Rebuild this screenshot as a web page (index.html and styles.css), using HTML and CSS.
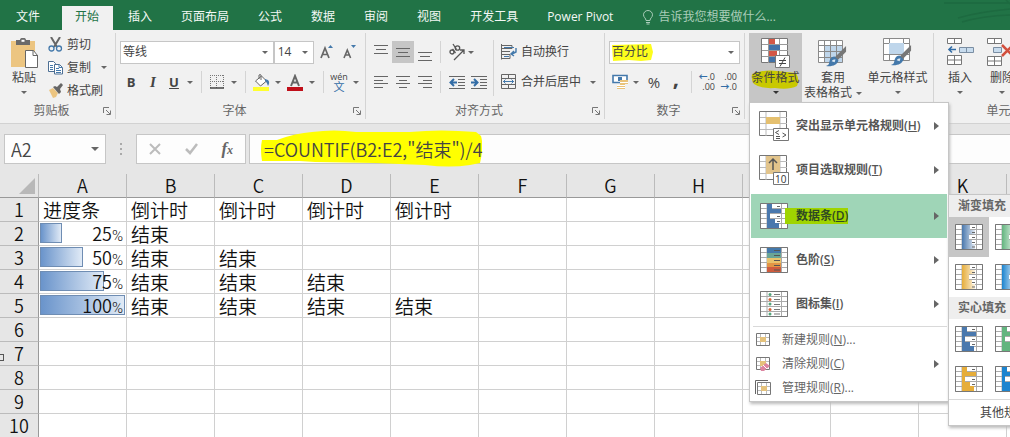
FILE: index.html
```html
<!DOCTYPE html>
<html lang="zh-CN">
<head>
<meta charset="utf-8">
<title>Excel</title>
<link rel="stylesheet" href="styles.css">
</head>
<body>
<svg class="defs" aria-hidden="true">
  <defs>
    <linearGradient id="fade" gradientUnits="userSpaceOnUse" x1="7" y1="0" x2="21" y2="0"><stop offset="0" stop-color="#fff" stop-opacity="0"/><stop offset="1" stop-color="#fff" stop-opacity=".9"/></linearGradient>
    <symbol id="grid28" viewBox="0 0 28 26">
      <path d="M.5 .5h27v25H.5zM7 .5v25M21.500 .5v25M.5 5.500h27M.5 10.500h27M.5 15.500h27M.5 20.500h27" fill="#fff" stroke="#aaa"/>
      <path d="M.5 .5h27v25H.5z" fill="none" stroke="#777"/>
    </symbol>
    <symbol id="bars-solid" viewBox="0 0 28 26">
      <use href="#grid28"/>
      <path d="M7 1h5v5H7zM7 6h14v4H7zM7 10h3v6H7zM7 16h8v4H7zM7 20h12v5H7z" fill="currentColor"/>
      <path d="M17 3.500h3M17 13.500h3M17 18.500h3" stroke="#666"/>
    </symbol>
    <symbol id="bars-fade" viewBox="0 0 28 26">
      <use href="#grid28"/>
      <path d="M7 1h8v5H7zM7 6h13v4H7zM7 10h7v6H7zM7 16h10v4H7zM7 20h13v5H7z" fill="currentColor"/>
      <path d="M7 1h8v5H7zM7 6h13v4H7zM7 10h7v6H7zM7 16h10v4H7zM7 20h13v5H7z" fill="url(#fade)"/>
      <path d="M17 3.500h3M17 8.500h3M17 13.500h3M17 18.500h3M17 23h3" stroke="#666"/>
    </symbol>
    <symbol id="launch" viewBox="0 0 8 8"><path d="M.5 6V.5H6M3 3l4 4M7.500 3.500v4h-4" fill="none" stroke="#777"/></symbol>
    <symbol id="brush" viewBox="0 0 24 24">
      <path d="M22 1v6l-9 9-3-3z" fill="#777"/><path d="M10 12l4 4c-1 5-7 7-13 6 4-1 3-3 4-6 1-3 3-4 5-4z" fill="#4479ab"/><path d="M7 17c1-2 2-2 4-2l-1 3z" fill="#dce9f4"/>
    </symbol>
    <symbol id="mini" viewBox="0 0 14 14"><path d="M.5 .5h13v12H.5z" fill="#fff" stroke="#777"/><path d="M1 4.500h12M1 8.500h12M4.500 1v11M9.500 1v11" stroke="#bbb"/><path d="M4 4h6v5H4z" fill="#e5c27c"/></symbol>
  </defs>
</svg>

<nav class="tabs">
  <button class="tab tab-file">文件</button>
  <button class="tab tab-active">开始</button>
  <button class="tab">插入</button>
  <button class="tab">页面布局</button>
  <button class="tab">公式</button>
  <button class="tab">数据</button>
  <button class="tab">审阅</button>
  <button class="tab">视图</button>
  <button class="tab">开发工具</button>
  <button class="tab">Power Pivot</button>
  <button class="tab tell">
    <svg width="12" height="15" viewBox="0 0 12 15"><path d="M4 10.500C4 8 1.500 7.500 1.500 4.800a4.500 4.300 0 0 1 9 0C10.500 7.500 8 8 8 10.500zM4 12.500h4M4.500 14h3" fill="none" stroke="#a9cdb9"/></svg>
    告诉我您想要做什么...
  </button>
  <svg class="swoosh" width="70" height="30" viewBox="0 0 70 30"><path d="M4 3h66M18 18q20-6 52-9M22 22q20-6 48-7M66 0l4 4" fill="none" stroke="#1d6a40" stroke-width="1.500"/></svg>
</nav>

<div class="ribbon">
  <section class="group clipboard">
    <div class="content">
      <button class="big paste">
        <svg width="29" height="31" viewBox="0 0 29 31"><path d="M1 3h24v26H1z" fill="#ecc581"/><path d="M6 2h4c0-3 6-3 6 0h4v5H6z" fill="#6a6a6a"/><path d="M11.500 1.800h3v2h-3z" fill="#fff"/><path d="M15.500 12.500h8l4 5v12h-12z" fill="#fff" stroke="#666"/><path d="M23 12.500v5h5" fill="none" stroke="#666"/></svg>
        <span>粘贴</span><i class="arrow"></i>
      </button>
      <div class="stack">
        <button class="row-btn"><svg width="15" height="15" viewBox="0 0 15 15"><path d="M3 0l6 10M12 0L6 10" stroke="#666" stroke-width="2"/><circle cx="3.500" cy="11.500" r="2.500" fill="none" stroke="#4479ab" stroke-width="1.300"/><circle cx="11" cy="11.500" r="2.500" fill="none" stroke="#4479ab" stroke-width="1.300"/></svg>剪切</button>
        <button class="row-btn"><svg width="15" height="15" viewBox="0 0 15 15"><path d="M.5 1.500h5l2 2v8h-7z" fill="#fff" stroke="#4d6f94"/><path d="M6.500 4.500h5l3 3v6.500h-8z" fill="#fff" stroke="#4d6f94"/><path d="M11 4.500v3h3M8 8.500h3M8 10.500h5M8 12.500h5M2 5.500h3M2 7.500h3M2 9.500h3" fill="none" stroke="#4479ab"/></svg>复制<i class="arrow after-copy"></i></button>
        <button class="row-btn"><svg width="15" height="15" viewBox="0 0 15 15"><path d="M1 7l4-2 5 5-2 4-3 1z" fill="#ecc581"/><path d="M5 4l2-1 2 1 4-4 2 2-3 4 1 3-2 2z" fill="#666"/></svg>格式刷</button>
      </div>
    </div>
    <footer class="caption"><span>剪贴板</span><button class="launcher" aria-label="剪贴板选项"><svg width="8" height="8"><use href="#launch"/></svg></button></footer>
  </section>

  <section class="group font">
    <div class="content rows">
      <div class="line">
        <label class="combo face"><input aria-label="字体" value="等线"><i class="arrow"></i></label>
        <label class="combo size"><input aria-label="字号" value="14"><i class="arrow"></i></label>
        <button class="tool grow" aria-label="增大字号"><svg width="14" height="16" viewBox="0 0 14 16"><path d="M1 14L5 4l4 10M2.500 10.500h5" fill="none" stroke="#666" stroke-width="1.700"/><path d="M8 4l2.500-3L13 4z" fill="#4479ab"/></svg></button>
        <button class="tool" aria-label="减小字号"><svg width="14" height="16" viewBox="0 0 14 16"><path d="M1 14l3.300-8 3.300 8M2 11h5" fill="none" stroke="#666" stroke-width="1.600"/><path d="M8 1l2.500 3L13 1z" fill="#4479ab"/></svg></button>
      </div>
      <div class="line">
        <button class="tool b">B</button>
        <button class="tool i">I</button>
        <button class="tool u">U</button><i class="arrow"></i>
        <i class="bar"></i>
        <button class="tool" aria-label="边框"><svg width="14" height="14" viewBox="0 0 14 14"><path d="M0 .5h14M0 6.500h14M.5 0v13M6.500 0v13M13.500 0v13" stroke="#777" stroke-dasharray="1 1"/><path d="M0 13h14" stroke="#444" stroke-width="1.500"/></svg></button><i class="arrow"></i>
        <i class="bar"></i>
        <button class="tool" aria-label="填充颜色"><svg width="17" height="17" viewBox="0 0 17 17"><path d="M2.500 7l6-5 5 5-6 5z" fill="#fff" stroke="#666"/><path d="M6 5V1q1.500-1 2 0v5" fill="none" stroke="#666"/><path d="M12 5l3 1c2 2 1 4 0 6q-1-4-3-5z" fill="#4479ab"/><path d="M0 13h16v4H0z" fill="#ffff2e"/></svg></button><i class="arrow"></i>
        <button class="tool" aria-label="字体颜色"><svg width="17" height="17" viewBox="0 0 17 17"><path d="M4 12L8 2l4 10M5.500 8.500h5" fill="none" stroke="#666" stroke-width="2"/><path d="M0 13h16v4H0z" fill="#c00f1a"/></svg></button><i class="arrow"></i>
        <i class="bar"></i>
        <button class="tool phon"><span>wén</span><b>文</b></button><i class="arrow"></i>
      </div>
    </div>
    <footer class="caption"><span>字体</span><button class="launcher" aria-label="字体选项"><svg width="8" height="8"><use href="#launch"/></svg></button></footer>
  </section>

  <section class="group align">
    <div class="content">
      <div class="rows">
        <div class="line">
          <button class="tool" aria-label="顶端对齐"><svg width="14" height="18"><path d="M0 2.500h14M2 6.500h10M0 10.500h14" stroke="#666"/></svg></button>
          <button class="tool on" aria-label="垂直居中"><svg width="14" height="18"><path d="M0 5.500h14M2 9.500h10M0 13.500h14" stroke="#666"/></svg></button>
          <button class="tool" aria-label="底端对齐"><svg width="14" height="18"><path d="M0 9.500h14M2 13.500h10M0 17.500h14" stroke="#666"/></svg></button>
          <i class="bar"></i>
          <button class="tool" aria-label="方向"><svg width="18" height="18" viewBox="0 0 18 18"><g fill="none" stroke="#555" stroke-width="1.300"><circle cx="4" cy="9" r="2"/><path d="M4.500 6l3 4"/><circle cx="9.500" cy="5" r="2.200"/><path d="M5 1l3.500 5.500M6 17L16 7M12 7h4v4"/></g></svg></button><i class="arrow"></i>
        </div>
        <div class="line">
          <button class="tool" aria-label="左对齐"><svg width="14" height="12"><path d="M0 .5h14M0 4.500h9M0 7.500h14M0 11.500h9" stroke="#666"/></svg></button>
          <button class="tool" aria-label="居中"><svg width="14" height="12"><path d="M0 .5h14M3 4.500h8M0 7.500h14M3 11.500h8" stroke="#666"/></svg></button>
          <button class="tool" aria-label="右对齐"><svg width="14" height="12"><path d="M0 .5h14M5 4.500h9M0 7.500h14M5 11.500h9" stroke="#666"/></svg></button>
          <i class="bar"></i>
          <button class="tool" aria-label="减少缩进"><svg width="16" height="13" viewBox="0 0 16 13"><path d="M0 .5h16M9 3.500h7M9 6.500h7M9 9.500h7M0 12.500h16" stroke="#666"/><path d="M8 6.500H2M5 3L1.500 6.500 5 10" fill="none" stroke="#336da6" stroke-width="2"/></svg></button>
          <button class="tool" aria-label="增加缩进"><svg width="16" height="13" viewBox="0 0 16 13"><path d="M0 .5h16M9 3.500h7M9 6.500h7M9 9.500h7M0 12.500h16" stroke="#666"/><path d="M0 6.500h6M3 3l3.500 3.500L3 10" fill="none" stroke="#336da6" stroke-width="2"/></svg></button>
        </div>
      </div>
      <i class="bar tall"></i>
      <div class="rows">
        <button class="row-btn"><svg width="16" height="16" viewBox="0 0 16 16"><path d="M.5 0v15.500M0 1.500h11v3H0M0 7.500h9M0 10.500h9v4H0" fill="none" stroke="#666"/><path d="M3 3.500h10M3 12.500h5" stroke="#4479ab"/><path d="M15 4v4l-4 2M13 7l-3 3 3 2" fill="none" stroke="#4479ab" stroke-width="1.400"/></svg>自动换行</button>
        <button class="row-btn"><svg width="16" height="16" viewBox="0 0 16 16"><path d="M.5 .5h14v14H.5zM.5 4.500h14M.5 10.500h14M7.500 .5v4M7.500 10.500v4" fill="none" stroke="#666"/><path d="M2 7.500h11M4.500 5.500l-2 2 2 2M10.500 5.500l2 2-2 2" fill="none" stroke="#4479ab"/></svg>合并后居中<i class="arrow"></i></button>
      </div>
    </div>
    <footer class="caption"><span>对齐方式</span><button class="launcher" aria-label="对齐选项"><svg width="8" height="8"><use href="#launch"/></svg></button></footer>
  </section>

  <section class="group number">
    <div class="content rows">
      <div class="line"><label class="combo format"><svg class="mark" viewBox="0 0 42 17" preserveAspectRatio="none"><path d="M1 1l39-1 2 8-2 8-10 1-12-1-16 1z" fill="#fdfd1c"/></svg><input aria-label="数字格式" value="百分比"><i class="arrow"></i></label></div>
      <div class="line">
        <button class="tool" aria-label="会计格式"><svg width="17" height="16" viewBox="0 0 17 16"><path d="M1 1.500h14v7H1z" fill="#fff" stroke="#4479ab" stroke-width="1.600"/><path d="M6 3h4v4H6z" fill="#4479ab"/><path d="M8 6h8v4h-3v5H5v-4h3z" fill="#e9c37a"/><path d="M8 8.500h8M5 11.500h8M5 13.500h8" stroke="#fff"/></svg></button><i class="arrow"></i>
        <button class="tool percent">%</button>
        <button class="tool comma">,</button>
        <i class="bar"></i>
        <button class="tool dec"><span><b>←</b>.0</span><span>.00</span></button>
        <button class="tool dec"><span>.00</span><span><b>→</b>.0</span></button>
      </div>
    </div>
    <footer class="caption"><span>数字</span><button class="launcher" aria-label="数字选项"><svg width="8" height="8"><use href="#launch"/></svg></button></footer>
  </section>

  <section class="group styles">
    <div class="content">
      <div class="anchor">
        <button class="big cond">
          <svg class="mark" viewBox="0 0 48 20" preserveAspectRatio="none"><path d="M1 5Q14 0 26 2l19 2q4 7 1 13-8 4-22 2-14 1-21-4Q0 12 1 5z" fill="#c9c900"/></svg>
          <svg width="30" height="31" viewBox="0 0 30 31"><path d="M.5 .5h26v24H.5z" fill="#fff" stroke="#777"/><path d="M7.500 1v24M18.500 1v24M1 6.500h26M1 12.500h26M1 18.500h26" stroke="#999"/><path d="M8 1h6v5H8zM8 13h8v5H8z" fill="#d35746"/><path d="M8 7h11v5H8zM8 19h6v5H8z" fill="#4272a8"/><path d="M14.500 17.500h14v12h-14z" fill="#fff" stroke="#777"/><path d="M18 22.500h7M18 25.500h7M24 19.500l-5 9" stroke="#444"/></svg>
          <span>条件格式</span><i class="arrow"></i>
        </button>

        <div class="menu">
          <button class="item"><svg width="30" height="31" viewBox="0 0 30 31"><path d="M.5 .5h27v24H.5z" fill="#fff" stroke="#777"/><path d="M7 1v24M21 1v24M1 6.500h27M1 12.500h27M1 18.500h27" stroke="#bbb"/><path d="M7 6h14v7H7z" fill="#e5c06f"/><path d="M14.500 17.500h15v12h-15z" fill="#fff" stroke="#777"/><path d="M20 19.500l-3.500 2 3.500 2M17 25.500h4M17 27.500h4M23.500 22l3.500 2-3.500 2" fill="none" stroke="#555"/></svg><span>突出显示单元格规则(<u>H</u>)</span><i class="more"></i></button>
          <button class="item"><svg width="30" height="31" viewBox="0 0 30 31"><path d="M.5 .5h27v24H.5z" fill="#fff" stroke="#777"/><path d="M7 1v24M21 1v24M1 6.500h27M1 12.500h27M1 18.500h27" stroke="#bbb"/><path d="M7 1h14v18H7z" fill="#e2c48b"/><path d="M14 15V4M10 8l4-4 4 4" fill="none" stroke="#555" stroke-width="1.500"/><path d="M14.500 17.500h15v12h-15z" fill="#fff" stroke="#777"/><text x="16" y="27.500" font-family="Open Sans, sans-serif" font-size="10" font-weight="400" fill="#333">10</text></svg><span>项目选取规则(<u>T</u>)</span><i class="more"></i></button>
          <div class="anchor selected">
            <button class="item"><svg class="blue" width="28" height="26"><use href="#bars-solid"/></svg><span class="hot">数据条(<u>D</u>)</span><i class="more"></i></button>
            <div class="submenu">
              <h3>渐变填充</h3>
              <div class="swatches">
                <button class="on blue" aria-label="蓝色渐变"><svg width="28" height="26"><use href="#bars-fade"/></svg></button>
                <button class="green" aria-label="绿色渐变"><svg width="28" height="26"><use href="#bars-fade"/></svg></button>
                <button class="orange" aria-label="橙色渐变"><svg width="28" height="26"><use href="#bars-fade"/></svg></button>
                <button class="sky" aria-label="浅蓝渐变"><svg width="28" height="26"><use href="#bars-fade"/></svg></button>
              </div>
              <h3>实心填充</h3>
              <div class="swatches">
                <button class="blue" aria-label="蓝色"><svg width="28" height="26"><use href="#bars-solid"/></svg></button>
                <button class="green" aria-label="绿色"><svg width="28" height="26"><use href="#bars-solid"/></svg></button>
                <button class="orange" aria-label="橙色"><svg width="28" height="26"><use href="#bars-solid"/></svg></button>
                <button class="sky" aria-label="浅蓝"><svg width="28" height="26"><use href="#bars-solid"/></svg></button>
              </div>
              <button class="other">其他规则</button>
            </div>
          </div>
          <button class="item"><svg width="28" height="26" viewBox="0 0 28 26"><use href="#grid28"/><path d="M7 1h14v5H7z" fill="#4479ab"/><path d="M7 6h14v5H7z" fill="#6aa596"/><path d="M7 11h14v5H7z" fill="#e9c36c"/><path d="M7 16h14v4H7z" fill="#e29545"/><path d="M7 20h14v5H7z" fill="#cf5c3e"/><path d="M14 3.500h6M14 8.500h6M14 13.500h6M14 18.500h6M14 23h6" stroke="#555"/></svg><span>色阶(<u>S</u>)</span><i class="more"></i></button>
          <button class="item"><svg width="28" height="26" viewBox="0 0 28 26"><use href="#grid28"/><path d="M14 3.500h6M14 8.500h6M14 13.500h6M14 18.500h6M14 23h6" stroke="#777"/><g fill="#d9653b"><circle cx="10" cy="8.500" r="1.500"/><circle cx="10" cy="18.500" r="1.500"/></g><g fill="#55a57c"><circle cx="10" cy="3.500" r="1.500"/><circle cx="10" cy="13" r="1.500"/><circle cx="10" cy="23" r="1.500"/></g></svg><span>图标集(<u>I</u>)</span><i class="more"></i></button>
          <hr>
          <button class="item small"><svg width="16" height="16" viewBox="0 0 16 16"><use href="#mini" x="1" y="1" width="14" height="14"/></svg><span>新建规则(<u>N</u>)...</span></button>
          <button class="item small"><svg width="16" height="16" viewBox="0 0 16 16"><use href="#mini" x="1" y="1" width="14" height="14"/><path d="M5 12l6-5 4 3-6 5H6z" fill="#dc84a0"/><path d="M8 9l4 4" stroke="#fff"/></svg><span>清除规则(<u>C</u>)</span><i class="more"></i></button>
          <button class="item small"><svg width="16" height="16" viewBox="0 0 16 16"><path d="M.5 14V.5H13" fill="none" stroke="#666"/><use href="#mini" x="2" y="2" width="14" height="14"/></svg><span>管理规则(<u>R</u>)...</span></button>
        </div>
      </div>
      <button class="big table-fmt"><svg width="30" height="31" viewBox="0 0 30 31"><path d="M.5 2.500h24v22H.5z" fill="#fff"/><path d="M7 8h18v17H7z" fill="#bfd6eb"/><path d="M.5 2.500h24v22H.5zM.5 7.500h24M.5 13.500h24M.5 19.500h24M6.500 3v22M12.500 3v22M18.500 3v22" fill="none" stroke="#8a8a8a"/><use href="#brush" x="7" y="7" width="23" height="23"/></svg><span>套用</span><span class="second">表格格式<i class="arrow"></i></span></button>
      <button class="big cell-style"><svg width="30" height="31" viewBox="0 0 30 31"><path d="M.5 .5h26v22H.5zM.5 5.500h26M.5 16.500h26M6.500 .5v22M20.500 .5v22" fill="#fff" stroke="#8a8a8a"/><path d="M6 5h15v11H6z" fill="#bfd6eb"/><use href="#brush" x="7" y="6" width="23" height="23"/></svg><span>单元格样式</span><i class="arrow"></i></button>
    </div>
  </section>

  <section class="group cells">
    <div class="content">
      <button class="big ins"><svg width="27" height="31" viewBox="0 0 27 31"><path d="M.5 .5h14v5H.5zM7.500 .5v5M.5 17.500h14v9H.5zM7.500 17.500v9M.5 22h14" fill="#fff" stroke="#777"/><path d="M12.500 9.500h14v5h-14zM19.500 9.500v5" fill="#c8dcee" stroke="#7a8ea3"/><path d="M2 11.500h7M5 8.500l-3 3 3 3" fill="none" stroke="#336da6" stroke-width="1.600"/></svg><span>插入</span><i class="arrow"></i></button>
      <button class="big ins"><svg width="30" height="31" viewBox="0 0 30 31"><path d="M.5 .5h14v5H.5zM7.500 .5v5M.5 18.500h14v9H.5zM7.500 18.500v9M.5 23h14" fill="#fff" stroke="#777"/><path d="M6.500 9.500h8v5h-8z" fill="#c8dcee" stroke="#7a8ea3"/><path d="M15 7l11 11M26 7L15 18" stroke="#d2503e" stroke-width="2.500"/></svg><span>删除</span><i class="arrow"></i></button>
    </div>
    <footer class="caption"><span>单元格</span></footer>
  </section>
</div>

<div class="formula-bar">
  <label class="field name"><input aria-label="名称框" value="A2"><i class="arrow"></i></label>
  <span class="dots"></span>
  <div class="field actions">
    <button aria-label="取消"><svg width="12" height="12"><path d="M1 1l10 10M11 1L1 11" stroke="#bcbcbc" stroke-width="2"/></svg></button>
    <button aria-label="输入"><svg width="13" height="12"><path d="M1 6l4 4 7-9" fill="none" stroke="#bcbcbc" stroke-width="2.500"/></svg></button>
    <button class="fx"><i>f</i><small>x</small></button>
  </div>
  <div class="field formula">
    <svg class="mark" viewBox="0 0 222 38" preserveAspectRatio="none"><path d="M2 11h15Q36 4 52 3q22-3 44 0h54q30-3 66 0l5 4q3 10-1 27l-10 2q-20 3-45 0l-50-2-60-1-15-1H2Q0 20 2 11z" fill="#ff0"/></svg>
    <input aria-label="编辑栏" value="=COUNTIF(B2:E2,&quot;结束&quot;)/4">
  </div>
</div>

<main class="sheet">
  <table>
    <thead><tr><th class="corner"></th><th>A</th><th>B</th><th>C</th><th>D</th><th>E</th><th>F</th><th>G</th><th>H</th><th></th><th></th><th>K</th><th></th></tr></thead>
    <tbody>
      <tr><th>1</th><td>进度条</td><td>倒计时</td><td>倒计时</td><td>倒计时</td><td>倒计时</td><td></td><td></td><td></td><td></td><td></td><td></td><td></td></tr>
      <tr><th>2</th><td class="val"><i style="width:25%"></i><span>25<b>%</b></span></td><td>结束</td><td></td><td></td><td></td><td></td><td></td><td></td><td></td><td></td><td></td><td></td></tr>
      <tr><th>3</th><td class="val"><i style="width:49%"></i><span>50<b>%</b></span></td><td>结束</td><td>结束</td><td></td><td></td><td></td><td></td><td></td><td></td><td></td><td></td><td></td></tr>
      <tr><th>4</th><td class="val"><i style="width:74%"></i><span>75<b>%</b></span></td><td>结束</td><td>结束</td><td>结束</td><td></td><td></td><td></td><td></td><td></td><td></td><td></td><td></td></tr>
      <tr><th>5</th><td class="val"><i style="width:98%"></i><span>100<b>%</b></span></td><td>结束</td><td>结束</td><td>结束</td><td>结束</td><td></td><td></td><td></td><td></td><td></td><td></td><td></td></tr>
      <tr><th>6</th><td></td><td></td><td></td><td></td><td></td><td></td><td></td><td></td><td></td><td></td><td></td><td></td></tr>
      <tr class="tick"><th>7</th><td></td><td></td><td></td><td></td><td></td><td></td><td></td><td></td><td></td><td></td><td></td><td></td></tr>
      <tr><th>8</th><td></td><td></td><td></td><td></td><td></td><td></td><td></td><td></td><td></td><td></td><td></td><td></td></tr>
      <tr><th>9</th><td></td><td></td><td></td><td></td><td></td><td></td><td></td><td></td><td></td><td></td><td></td><td></td></tr>
      <tr><th>10</th><td></td><td></td><td></td><td></td><td></td><td></td><td></td><td></td><td></td><td></td><td></td><td></td></tr>
    </tbody>
  </table>
</main>
</body>
</html>
```

FILE: styles.css
```css
* { box-sizing: border-box; }
body {
  margin: 0;
  height: 100vh;
  overflow: hidden;
  display: flex;
  flex-direction: column;
  background: #e6e6e6;
  color: #444;
  font: 12px/16px "Open Sans", "Noto Sans CJK SC", sans-serif;
}
button, input { font: inherit; color: inherit; border: 0; background: none; padding: 0; margin: 0; }
button { white-space: nowrap; }
svg { display: block; flex: none; }
i { flex: none; }
.defs { position: absolute; width: 0; height: 0; }
.arrow { width: 0; height: 0; border: 3px solid transparent; border-top-color: #666; border-bottom: 0; }

/* Tabs */
.tabs { position: relative; flex: none; display: flex; gap: 1px; height: 30px; padding-top: 6px; background: #217346; overflow: hidden; }
.tab { display: flex; align-items: center; gap: 4px; padding: 0 14px 2px; color: #f3f8f5; flex: none; }
.tab-file { padding: 0 21px 2px 16px; }
.tab-active { padding: 0 14px 2px 13px; background: #f1f1f1; color: #217346; }
.tell { color: #a9cdb9; }
.swoosh { position: absolute; right: 0; top: 0; }

/* Ribbon */
.ribbon { flex: none; display: flex; height: 94px; padding: 3px 0 4px; background: #f1f1f1; border-bottom: 1px solid #d2d2d2; }
.group { flex: none; display: flex; flex-direction: column; border-right: 1px solid #d4d4d4; }
.content { display: flex; height: 70px; }
.caption { display: flex; align-items: center; height: 16px; padding-right: 4px; color: #666; }
.caption span { flex: 1; text-align: center; }
.launcher { width: 8px; height: 8px; }
.big { position: relative; display: flex; flex-direction: column; align-items: center; padding-top: 5px; }
.big > svg:not(.mark) { margin-bottom: 1px; }
.big > span { line-height: 15px; position: relative; }
.big > .arrow { margin-top: 6px; }
.stack { display: flex; flex-direction: column; }
.row-btn { display: flex; align-items: center; gap: 4px; height: 23px; }
.paste { width: 48px; }
.after-copy { margin-left: 6px; }
.clipboard { width: 116px; }
.rows { display: flex; flex-direction: column; gap: 8px; padding-top: 8px; }
.content.rows { padding-left: 4px; padding-right: 4px; }
.line { display: flex; align-items: center; height: 22px; }
.tool { display: flex; align-items: center; justify-content: center; width: 22px; height: 22px; flex: none; }
.tool.on { background: #c6c6c6; }
.bar { width: 1px; height: 22px; background: #d4d4d4; margin: 0 8px; }
.combo { position: relative; display: flex; align-items: center; height: 23px; padding: 0 5px 0 2px; background: #fff; border: 1px solid #c6c6c6; }
.combo input { position: relative; flex: 1; min-width: 0; width: 0; }
.face { width: 157px; }
.size { width: 41px; padding-left: 3px; }
.grow { margin: 0 1px 0 2px; }
.font { width: 250px; }
.font .tool + .arrow { margin-left: 3px; }
.font .arrow + .tool { margin-left: 3px; }
.font .bar { margin: 0 4px 0 8px; }
.b, .i, .u { font-weight: 700; font-size: 13px; }
.i { font-family: "Liberation Serif", serif; font-style: italic; font-size: 15px; }
.u { width: 20px; text-decoration: underline; }
.phon { flex-direction: column; font-size: 9px; line-height: 9px; }
.phon b { color: #336da6; font-weight: 400; font-size: 11px; line-height: 11px; }
.align { width: 239px; }
.align .content { padding-left: 4px; }
.align .bar { margin: 0 5px 0 4px; }
.align .bar.tall { height: 56px; margin: 7px 7px 0 3px; }
.align .row-btn { height: 22px; }
.align .row-btn .arrow { margin-left: 5px; }
.number { width: 140px; }
.format { width: 131px; }
.format .mark { position: absolute; left: 1px; top: 2px; width: 42px; height: 17px; }
.number .line .tool + .arrow { margin: 0 4px 0 2px; }
.number .bar { margin: 0 4px; }
.percent { font-size: 15px; }
.comma { font-size: 22px; font-weight: 700; padding-bottom: 10px; }
.dec { flex-direction: column; align-items: flex-end; font-size: 9px; line-height: 10px; padding-right: 3px; }
.dec b { color: #336da6; }
.anchor { position: relative; }
.styles { width: 189px; }
.styles .content { padding-left: 4px; }
.cond { width: 53px; height: 70px; background: #c6c6c6; }
.cond .mark { position: absolute; left: 2px; top: 36px; width: 48px; height: 20px; }
.cond > .arrow { position: relative; border-top-color: #333; }
.table-fmt { width: 62px; }
.second { display: flex; align-items: center; gap: 4px; }
.second .arrow { margin-top: 2px; }
.cell-style { width: 67px; }
.cells { width: 146px; }
.cells .content { padding-left: 5px; }
.ins { width: 42px; }

/* Conditional formatting menu */
.menu { position: absolute; z-index: 2; left: 0; top: 69px; width: 200px; padding: 1px; background: #fff; border: 1px solid #c6c6c6; box-shadow: 1px 2px 3px #bbb; }
.item { display: flex; align-items: center; gap: 7px; width: 100%; height: 44px; padding: 0 8px; text-align: left; font-weight: 600; color: #555; }
.item > svg { width: 30px; }
.item > span { flex: 1; }
.more { width: 0; height: 0; border: 4px solid transparent; border-left: 5px solid #666; border-right: 0; }
.selected { margin-top: 2px; background: #9fd5b7; }
.hot { position: relative; color: #2f4a22; }
.selected .item { color: #444; }
.selected .item > .hot { flex: none; margin: 0 auto 0 -11px; padding: 0 0 0 11px; background: #9fd400; }
.menu hr { margin: 0 0 1px 2px; border: 0; border-top: 1px solid #d9d9d9; }
.menu .small { height: 24px; gap: 11px; padding-left: 4px; font-weight: 400; color: #666; }
.small > svg { width: 16px; }
.item.blue, .blue { color: #4a78ad; }
.green { color: #63b57f; }
.orange { color: #e6ad3a; }
.sky { color: #1c84cf; }
.submenu { position: absolute; left: 197px; top: 0; width: 122px; background: #fff; border: 1px solid #c6c6c6; box-shadow: 1px 2px 3px #bbb; }
.submenu h3 { margin: 0; padding: 0 9px; height: 22px; background: #eee; font-size: 12px; line-height: 22px; font-weight: 600; color: #666; }
.swatches { display: grid; grid-template-columns: 40px 40px; grid-auto-rows: 40px; }
.swatches button { display: flex; align-items: center; justify-content: center; }
.swatches .on { background: #c6c6c6; }
.other { display: block; width: 100%; height: 26px; padding-left: 31px; text-align: left; border-top: 1px solid #d9d9d9; }

/* Formula bar */
.formula-bar { flex: none; display: flex; padding: 10px 0 10px 4px; }
.field { position: relative; display: flex; align-items: center; height: 30px; background: #fdfdfd; border: 1px solid #c6c6c6; }
.field input { font-size: 18px; font-family: "Noto Sans CJK SC", sans-serif; font-weight: 350; flex: 1; min-width: 0; width: 0; }
.name { width: 102px; padding: 0 6px; }
.name .arrow { border-width: 4px; border-bottom: 0; }
.dots { width: 2px; margin: 9px 14px 9px 14px; background: repeating-linear-gradient(#aaa 0 2px, transparent 2px 5px); }
.actions { width: 110px; justify-content: space-around; }
.fx { font: 700 17px/20px "Liberation Serif", serif; color: #666; }
.fx small { font-size: 12px; font-style: italic; }
.formula { flex: 1; margin-left: 3px; border-right: 0; padding-left: 14px; }
.formula input { position: relative; }
.formula .mark { position: absolute; left: 10px; top: -6px; width: 222px; height: 38px; }

/* Sheet */
.sheet { flex: 1; min-height: 0; overflow: hidden; }
table { width: 1095px; table-layout: fixed; border-collapse: separate; border-spacing: 0; font: 350 18px/23px "Noto Sans CJK SC", sans-serif; color: #111; }
th, td { height: 24px; padding: 0; border-right: 1px solid #d0d0d0; border-bottom: 1px solid #d0d0d0; white-space: nowrap; overflow: hidden; }
th { position: relative; background: #e6e6e6; font-weight: 350; border-color: #bbb; }
thead th { border-bottom-color: #999; width: 88px; }
thead .corner { width: 39px; }
.corner::after { content: ""; position: absolute; right: 3px; bottom: 3px; border: 8px solid #b8b8b8; border-top-color: transparent; border-left-color: transparent; }
tbody th { border-right-color: #999; }
td { background: #fff; padding-left: 4px; font-size: 19px; }
.val { position: relative; padding: 0 3px 0 1px; text-align: right; font-size: 18px; }
.val i { position: absolute; left: 1px; top: 1px; bottom: 2px; border: 1px solid #6f8db3; background: linear-gradient(90deg, #6a94cb, #e0eaf6); }
.val span { position: relative; }
.val b { font: 300 15px/1 Roboto, sans-serif; }
.tick th::before { content: ""; position: absolute; left: -2px; bottom: 4px; width: 4px; height: 5px; border: 1px solid #555; }
```
